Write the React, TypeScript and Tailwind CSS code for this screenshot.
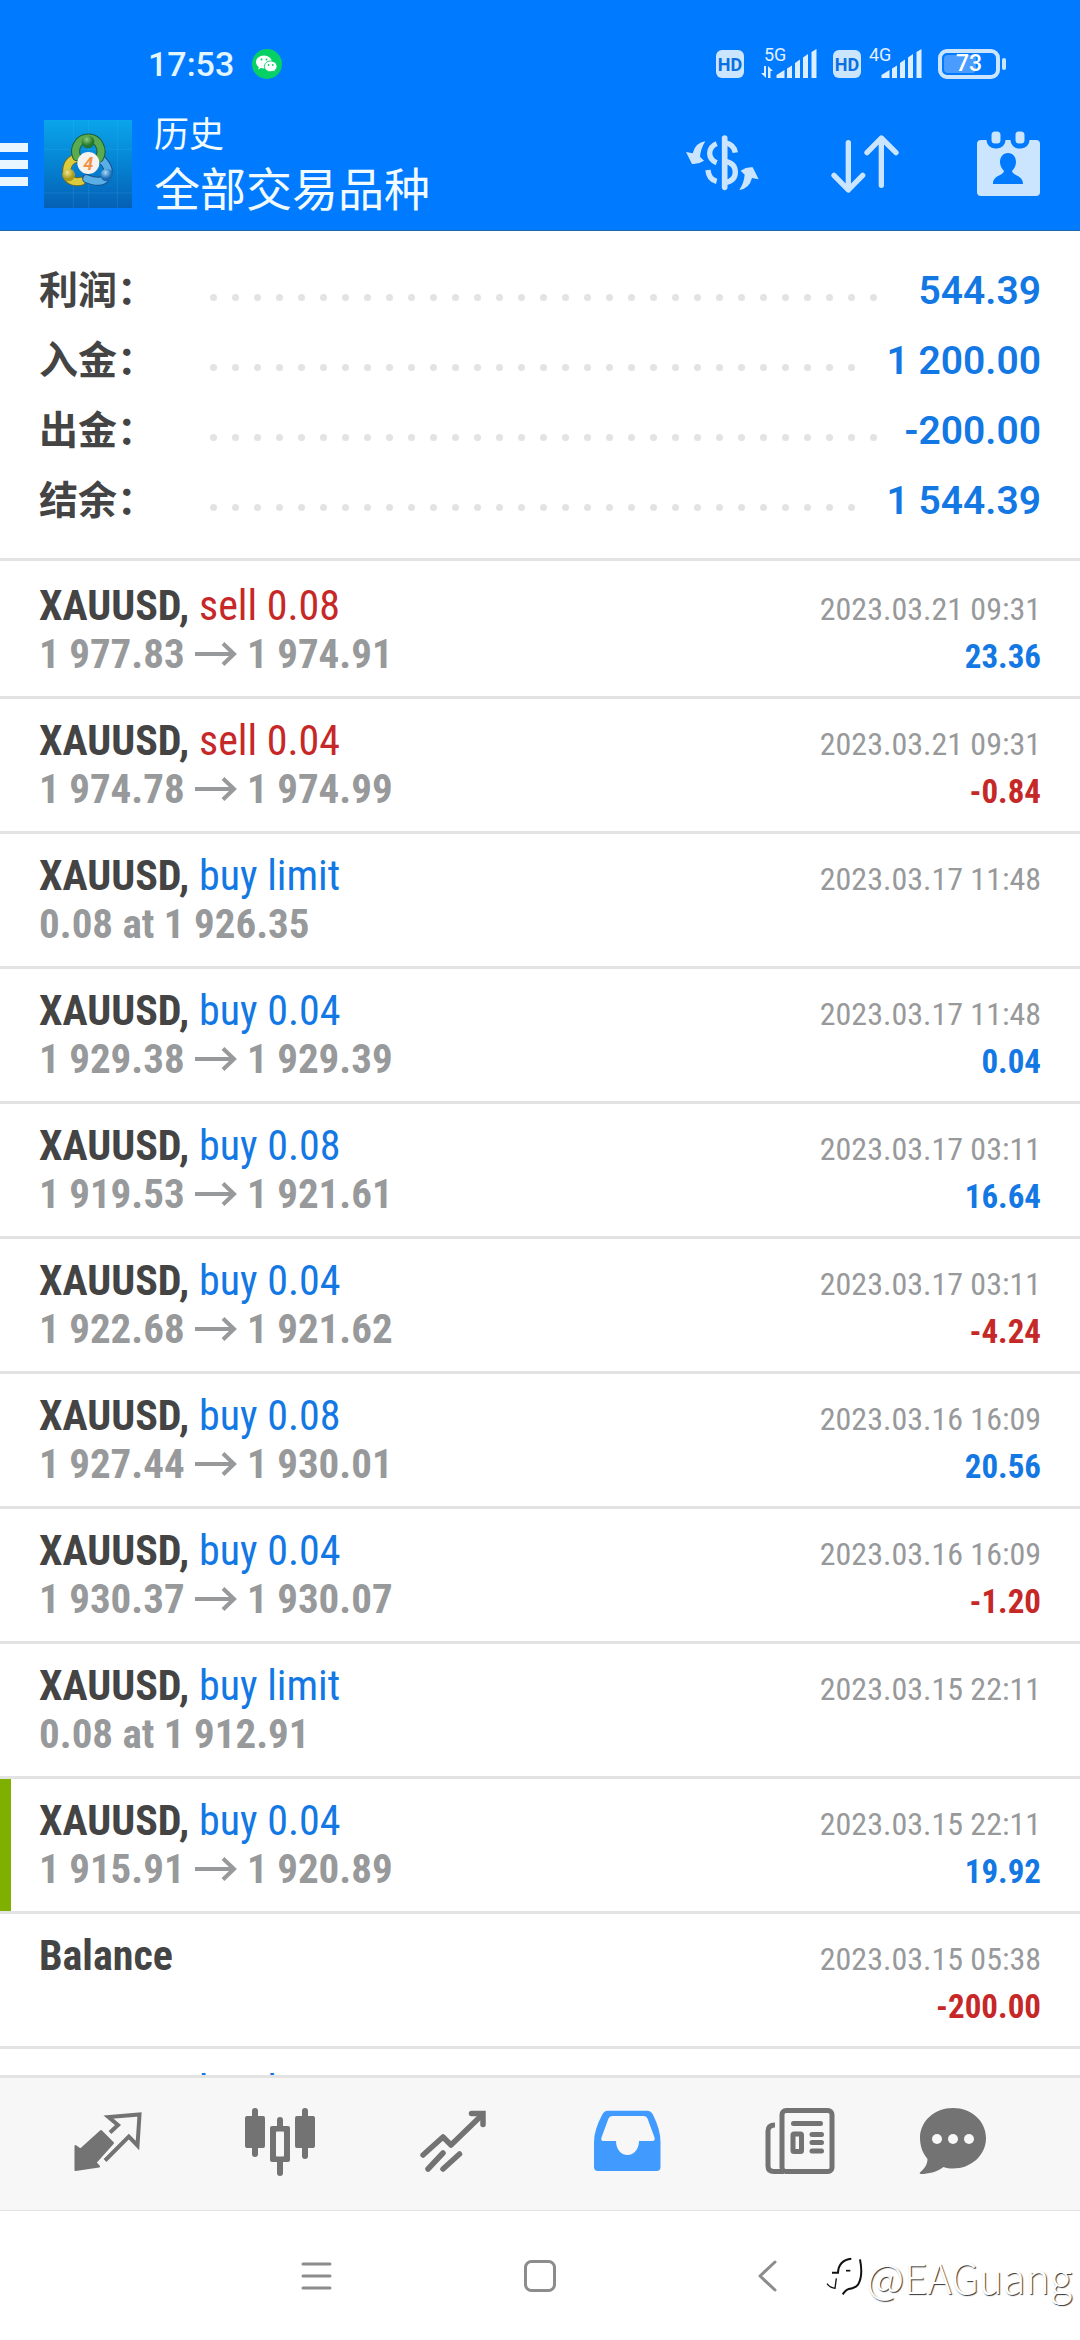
import clsx from "clsx";

type Deal = {
  symbol: string;
  action?: string;
  side?: "buy" | "sell";
  open?: string;
  close?: string;
  note?: string;
  time: string;
  profit?: string;
  marked?: boolean;
};

const summary = [
  { label: "利润：", value: "544.39" },
  { label: "入金：", value: "1 200.00" },
  { label: "出金：", value: "-200.00" },
  { label: "结余：", value: "1 544.39" },
];

const deals: Deal[] = [
  { symbol: "XAUUSD,", action: "sell 0.08", side: "sell", open: "1 977.83", close: "1 974.91", time: "2023.03.21 09:31", profit: "23.36" },
  { symbol: "XAUUSD,", action: "sell 0.04", side: "sell", open: "1 974.78", close: "1 974.99", time: "2023.03.21 09:31", profit: "-0.84" },
  { symbol: "XAUUSD,", action: "buy limit", side: "buy", note: "0.08 at 1 926.35", time: "2023.03.17 11:48" },
  { symbol: "XAUUSD,", action: "buy 0.04", side: "buy", open: "1 929.38", close: "1 929.39", time: "2023.03.17 11:48", profit: "0.04" },
  { symbol: "XAUUSD,", action: "buy 0.08", side: "buy", open: "1 919.53", close: "1 921.61", time: "2023.03.17 03:11", profit: "16.64" },
  { symbol: "XAUUSD,", action: "buy 0.04", side: "buy", open: "1 922.68", close: "1 921.62", time: "2023.03.17 03:11", profit: "-4.24" },
  { symbol: "XAUUSD,", action: "buy 0.08", side: "buy", open: "1 927.44", close: "1 930.01", time: "2023.03.16 16:09", profit: "20.56" },
  { symbol: "XAUUSD,", action: "buy 0.04", side: "buy", open: "1 930.37", close: "1 930.07", time: "2023.03.16 16:09", profit: "-1.20" },
  { symbol: "XAUUSD,", action: "buy limit", side: "buy", note: "0.08 at 1 912.91", time: "2023.03.15 22:11" },
  { symbol: "XAUUSD,", action: "buy 0.04", side: "buy", open: "1 915.91", close: "1 920.89", time: "2023.03.15 22:11", profit: "19.92", marked: true },
  { symbol: "Balance", time: "2023.03.15 05:38", profit: "-200.00" },
  { symbol: "XAUUSD,", action: "buy limit", side: "buy", time: "" },
];

const WeChatBadge = () => (
  <svg viewBox="0 0 30 30" className="size-[30px]" aria-hidden="true">
    <circle cx="15" cy="15" r="15" fill="#07d165" />
    <path
      d="M12 6.500c-4.600 0-8 3-8 6.600 0 2.100 1.100 3.800 2.800 5l-.6 2.300 2.700-1.300c1 .3 2 .5 3.100.5 4.400 0 8-2.900 8-6.500s-3.600-6.600-8-6.600z"
      fill="#fff"
    />
    <path
      d="M18.700 12c-3.600 0-6.300 2.400-6.300 5.400s2.800 5.300 6.300 5.300c.8 0 1.600-.1 2.300-.4l2.200 1.100-.5-1.900c1.400-1 2.300-2.500 2.300-4.100 0-3-2.800-5.400-6.300-5.400z"
      fill="#fff"
      stroke="#07d165"
      strokeWidth="1"
    />
    <g fill="#07d165">
      <circle cx="9.500" cy="10.500" r="1" />
      <circle cx="14.500" cy="10.500" r="1" />
      <circle cx="16.600" cy="16" r=".9" />
      <circle cx="20.800" cy="16" r=".9" />
    </g>
  </svg>
);

const HdBadge = () => (
  <span className="flex h-7 w-7 items-center justify-center rounded-md bg-[#cce5ff] text-[18px] font-bold text-[#0a6fe0]">
    HD
  </span>
);

const Signal = ({ label, arrows }: { label: string; arrows?: boolean }) => (
  <span className={clsx("relative block h-[30px] w-[53px]", arrows ? "ml-1" : "-ml-2")}>
    <svg viewBox="0 0 53 30" className="size-full overflow-visible" fill="#dceeff" aria-hidden="true">
      {arrows && <path d="M0 17h2v12l-5-5h3zM4 17l5 5H6.500v7H4z" />}
      <path d="M12.500 29v-3l8-5v8zM23 29v-9.500l5-3V29zM31 29V14l5-3.500V29zM39 29V8.500L44 5v24zM47.500 29V3l5-3v29z" />
    </svg>
    <span className="absolute top-0 left-0 text-[18px] leading-3 text-[#e3f1ff]">{label}</span>
  </span>
);

const Battery = () => (
  <span className="flex items-center gap-0.5">
    <span className="relative flex h-[30px] w-[62px] items-center justify-center rounded-[9px] border-4 border-[#cce5ff]">
      <span className="absolute inset-y-0.5 left-0.5 w-8 rounded-sm bg-[#4a9dff]" />
      <span className="relative text-[23px] font-medium text-white">73</span>
    </span>
    <span className="h-3 w-1 rounded-sm bg-[#cce5ff]" />
  </span>
);

const AppLogo = () => (
  <svg viewBox="24 28 264 264" className="size-[88px] shrink-0" aria-hidden="true">
    <defs>
      <linearGradient id="sky" x1="0" y1="0" x2="0" y2="1">
        <stop offset="0" stopColor="#0aa5ea" />
        <stop offset=".5" stopColor="#0583d3" />
        <stop offset="1" stopColor="#0560b4" />
      </linearGradient>
      <radialGradient id="green" cx=".4" cy=".3">
        <stop offset="0" stopColor="#8fd07a" />
        <stop offset="1" stopColor="#22762f" />
      </radialGradient>
      <radialGradient id="gold" cx=".4" cy=".3">
        <stop offset="0" stopColor="#f2e58a" />
        <stop offset="1" stopColor="#a99a1c" />
      </radialGradient>
      <radialGradient id="blue" cx=".4" cy=".3">
        <stop offset="0" stopColor="#a5daf8" />
        <stop offset="1" stopColor="#1769b4" />
      </radialGradient>
    </defs>
    <rect x="24" y="28" width="264" height="264" fill="url(#sky)" />
    <path d="M24 116h264M24 247h264M112 28v264M158 28v264M244 28v264" stroke="#5cc0f0" strokeOpacity=".25" strokeWidth="2" />
    <g fill="none" strokeLinecap="round">
      <path d="M122 142q-30 8-30 42t44 28" stroke="#6b6a20" strokeWidth="27" />
      <path d="M122 142q-30 8-30 42t44 28" stroke="#dccb3c" strokeWidth="21" />
      <path d="M196 146q30 28 16 52t-60 6" stroke="#15508c" strokeWidth="27" />
      <path d="M196 146q30 28 16 52t-60 6" stroke="#5aaee6" strokeWidth="21" />
      <path d="M122 138a38 40 0 1 1 68 4" stroke="#1c5c38" strokeWidth="27" />
      <path d="M122 138a38 40 0 1 1 68 4" stroke="#58ab4e" strokeWidth="21" />
    </g>
    <circle cx="156" cy="94" r="19" fill="url(#green)" />
    <circle cx="98" cy="193" r="19" fill="url(#gold)" />
    <circle cx="212" cy="193" r="19" fill="url(#blue)" />
    <circle cx="157" cy="157" r="33" fill="#f6f3ef" />
    <text x="157" y="177" textAnchor="middle" fontSize="54" fontWeight="700" fontStyle="italic" fill="#f0924a">
      4
    </text>
  </svg>
);

const CurrencyIcon = () => (
  <svg viewBox="12 44 228 180" className="h-[60px] w-[76px]" fill="none" stroke="#cce5ff" strokeWidth="16" aria-hidden="true">
    <path d="M76 66Q46 70 38 102L18 98l18 36q18 2 36-10L60 112q2-24 16-46z" fill="#cce5ff" stroke="none" />
    <path d="M76 66Q46 70 38 102L18 98l18 36q18 2 36-10L60 112q2-24 16-46z" fill="#cce5ff" stroke="none" transform="rotate(180 127 139)" />
    <path d="M134 56v148" strokeWidth="17" strokeLinecap="round" />
    <path d="M110 73Q89 82 89 102t21 28M84 152q2 28 26 34" />
    <path d="M136 70q26 6 30 30" />
    <path d="M136 126q30 6 30 32t-30 32" />
  </svg>
);

const SortIcon = () => (
  <svg viewBox="456 44 216 180" className="h-[60px] w-[72px] overflow-visible" fill="none" stroke="#cce5ff" strokeWidth="16" strokeLinecap="round" strokeLinejoin="round" aria-hidden="true">
    <path d="M505 70v140M462 168l43 44 43-44" />
    <path d="M604 198V58M561 100l43-44 44 44" />
  </svg>
);

const CalendarIcon = () => (
  <svg viewBox="0 0 64 66" className="h-[66px] w-16" aria-hidden="true">
    <rect x="1" y="9" width="63" height="56" rx="4" fill="#cce5ff" />
    <g fill="#cce5ff" stroke="#007aff" strokeWidth="5">
      <rect x="13" y="-2" width="14" height="17" rx="6" />
      <rect x="37" y="-2" width="14" height="17" rx="6" />
    </g>
    <path
      d="M32 22c5 0 8 4 8 9 0 4-2 7-4 9 1 5 11 4 11 13H17c0-9 10-8 11-13-2-2-4-5-4-9 0-5 3-9 8-9z"
      fill="#007aff"
    />
  </svg>
);

const QuotesIcon = () => (
  <svg viewBox="0 0 72 72" className="size-[72px]" aria-hidden="true">
    <path d="M4.500 38L9.500 41.500l20.500-18.500L42 35 24.500 54.500l3.500 4-23.500 3.500z" fill="#737373" stroke="#737373" strokeWidth="2" strokeLinejoin="round" />
    <path d="M39 24.500l8-7.500-9.500-8 31-2.500-2 31-8.700-9L34 52.500" fill="none" stroke="#737373" strokeWidth="4" />
  </svg>
);

const ChartIcon = () => (
  <svg viewBox="0 0 72 72" className="size-[72px]" fill="#737373" aria-hidden="true">
    <rect x="1" y="8" width="20" height="32" rx="2" />
    <rect x="8" y="0" width="6" height="49" rx="3" />
    <path fillRule="evenodd" d="M28 18h16q2 0 2 2v32q0 2-2 2H28q-2 0-2-2V20q0-2 2-2zm5 5.500q-1 0-1 1v23q0 1 1 1h6q1 0 1-1v-23q0-1-1-1z" />
    <rect x="33" y="9" width="6" height="12" rx="3" />
    <rect x="33" y="50" width="6" height="18" rx="3" />
    <rect x="51" y="8" width="20" height="32" rx="2" />
    <rect x="58" y="0" width="6" height="51" rx="3" />
  </svg>
);

const TradeIcon = () => (
  <svg viewBox="0 0 72 72" className="size-[72px]" fill="none" stroke="#737373" strokeWidth="5.500" strokeLinecap="round" aria-hidden="true">
    <path d="M6 47l20-18 8 8L65 7" strokeLinejoin="round" />
    <path d="M54.500 5.500H66v11" />
    <path d="M26 45L11 61M42.500 46L26 61" />
  </svg>
);

const HistoryIcon = () => (
  <svg viewBox="0 0 72 72" className="size-[72px]" aria-hidden="true">
    <path
      fillRule="evenodd"
      fill="#419bff"
      d="M17 2.700h39q4 0 6 4 7.500 15 7.500 27V59q0 4-4 4H7q-4 0-4-4V34Q3 22 11 7q2-4.300 6-4.300zM21 8q-2.500 0-3.500 2.500l-7 19q-1 3.500 2 3.500H25c0 8 5 14 11.500 14S48 41 48 33h13q3.500 0 2.500-3.500l-7-19Q55.500 8 53 8z"
    />
  </svg>
);

const NewsIcon = () => (
  <svg viewBox="0 0 72 72" className="size-[72px]" fill="none" stroke="#737373" strokeWidth="5" aria-hidden="true">
    <rect x="18" y="2.500" width="50" height="61" rx="4" />
    <path d="M11 17q-7 0-7 6v35q0 5.500 6 5.500h10" />
    <path d="M29.500 15.500h27M48 26.500h9.500M48 34.500h9.500M48 43h9.500" strokeLinecap="round" />
    <rect x="29" y="26" width="8.500" height="17.500" rx="1" />
  </svg>
);

const ChatIcon = () => (
  <svg viewBox="0 0 72 72" className="size-[72px]" aria-hidden="true">
    <path
      d="M34 0c18.500 0 33 13 33 30S52.500 60.500 34 60.500c-3.500 0-6.500-.5-9.500-1.500C18 64 9 66 2 66c-2 0-1.500-1-.5-2C6 60 8.500 56 8.500 51 4 45.500 1 38.500 1 30 1 13 15.500 0 34 0z"
      fill="#737373"
    />
    <g fill="#f7f7f7">
      <circle cx="18" cy="31" r="5" />
      <circle cx="34" cy="31" r="5" />
      <circle cx="50" cy="31" r="5" />
    </g>
  </svg>
);

const PriceArrow = () => (
  <svg viewBox="0 0 42 24" className="h-6 w-[42px]" fill="none" stroke="#97999b" strokeWidth="4" aria-hidden="true">
    <path d="M0 12h39M28 1.500L39 12 28 22.500" />
  </svg>
);

const tabs = [
  { name: "行情", icon: <QuotesIcon /> },
  { name: "图表", icon: <ChartIcon /> },
  { name: "交易", icon: <TradeIcon /> },
  { name: "历史", icon: <HistoryIcon /> },
  { name: "新闻", icon: <NewsIcon /> },
  { name: "消息", icon: <ChatIcon /> },
];

const SummaryRow = ({ label, value }: { label: string; value: string }) => (
  <div className="flex h-[70px] items-center">
    <dt className="w-[163px] shrink-0 text-[39px] font-bold text-[#444]">{label}</dt>
    <dd className="flex flex-1 items-center gap-4">
      {/* dotted leader, only whole dots are kept */}
      <span className="mt-3.5 flex h-2 flex-1 flex-wrap overflow-hidden" aria-hidden="true">
        {Array.from({ length: 60 }, (_, i) => (
          <span key={i} className="flex h-2 w-[22px] justify-center">
            <span className="size-[7px] rounded-full bg-[#e3e3e3]" />
          </span>
        ))}
      </span>
      <span className="text-[39px] font-semibold text-[#1378e3]">{value}</span>
    </dd>
  </div>
);

const DealRow = ({ deal }: { deal: Deal }) => (
  <li
    className={clsx(
      "relative flex h-[135px] shrink-0 justify-between border-b-3 border-[#e3e3e3] px-[39px] pt-[18px] font-['Roboto_Condensed','Roboto',sans-serif] leading-12",
      deal.marked && "before:absolute before:inset-y-0 before:left-0 before:w-[11px] before:bg-[#7fb000]"
    )}
  >
    <div className="text-[41px]">
      <p className="text-[42px]">
        <span className="font-bold text-[#444]">{deal.symbol}</span>{" "}
        <span className={deal.side === "sell" ? "text-[#c62828]" : "text-[#1378e3]"}>{deal.action}</span>
      </p>
      {deal.note && <p className="font-bold text-[#97999b]">{deal.note}</p>}
      {deal.open && (
        <p className="flex items-center font-bold text-[#97999b]">
          <span className="w-[156px]">{deal.open}</span>
          <PriceArrow />
          <span className="pl-2.5">{deal.close}</span>
        </p>
      )}
    </div>
    <div className="pt-[3px] text-right">
      <p className="text-[32px] text-[#97999b]">{deal.time}</p>
      {deal.profit && (
        <p className={clsx("text-[33px] font-bold", deal.profit.startsWith("-") ? "text-[#c62828]" : "text-[#1378e3]")}>
          {deal.profit}
        </p>
      )}
    </div>
  </li>
);

export default function App() {
  return (
    <div className="relative flex h-screen flex-col overflow-hidden bg-white font-['Roboto','Noto_Sans_CJK_SC',sans-serif]">
      <header className="shrink-0 border-b border-[#1e68b0] bg-[#007aff] text-white">
        {/* Status bar */}
        <div className="flex h-[98px] items-center justify-between pt-[30px] pr-[74px] pl-[148px]">
          <div className="flex items-center gap-[18px]">
            <span className="text-[34px] font-medium text-[#e3f5ff]">17:53</span>
            <WeChatBadge />
          </div>
          <div className="flex items-center gap-4">
            <HdBadge />
            <Signal label="5G" arrows />
            <HdBadge />
            <Signal label="4G" />
            <Battery />
          </div>
        </div>

        {/* Toolbar */}
        <div className="flex h-[132px] items-center pr-10">
          <button aria-label="菜单" className="mr-4 flex w-7 flex-col gap-2">
            <span className="h-[9px] bg-[#e8f6ff]" />
            <span className="h-[9px] bg-[#e8f6ff]" />
            <span className="h-[9px] bg-[#e8f6ff]" />
          </button>
          <AppLogo />
          <div className="flex-1 pl-[22px] font-['Noto_Sans_CJK_SC',sans-serif] text-[#f0faff]">
            <p className="text-[35px] leading-[44px]">历史</p>
            <h1 className="text-[46px] leading-[64px] font-normal">全部交易品种</h1>
          </div>
          <div className="flex items-center gap-[72px]">
            <button aria-label="货币"><CurrencyIcon /></button>
            <button aria-label="排序"><SortIcon /></button>
            <button aria-label="日期"><CalendarIcon /></button>
          </div>
        </div>
      </header>

      <main className="min-h-0 flex-1 overflow-hidden">
        <dl className="border-b-3 border-[#e3e3e3] px-[39px] pt-[25px] pb-[22px]">
          {summary.map((row) => (
            <SummaryRow key={row.label} {...row} />
          ))}
        </dl>
        <ul className="flex flex-col pt-[3px]">
          {deals.map((deal, i) => (
            <DealRow key={i} deal={deal} />
          ))}
        </ul>
      </main>

      {/* Tab bar */}
      <nav className="grid h-[136px] shrink-0 grid-cols-6 items-center border-t-3 border-b border-[#e3e3e3] bg-[#f7f7f7] px-5">
        {tabs.map((tab) => (
          <button key={tab.name} aria-label={tab.name} className="flex justify-center last:justify-start last:pl-8">
            {tab.icon}
          </button>
        ))}
      </nav>

      {/* System navigation */}
      <div className="flex h-[129px] shrink-0 items-center justify-center gap-48">
        <button aria-label="最近任务">
          <svg viewBox="0 0 32 32" className="size-8" stroke="#8c8c8c" strokeWidth="3" strokeLinecap="round">
            <path d="M3 4h27M3 16h27M3 28h27" />
          </svg>
        </button>
        <button aria-label="主屏幕">
          <svg viewBox="0 0 32 32" className="size-8" fill="none" stroke="#8c8c8c" strokeWidth="3">
            <rect x="1.500" y="1.500" width="29" height="29" rx="6" />
          </svg>
        </button>
        <button aria-label="返回">
          <svg viewBox="0 0 32 32" className="size-8" fill="none" stroke="#8c8c8c" strokeWidth="3" strokeLinecap="round" strokeLinejoin="round">
            <path d="M27 2L12 16l15 14" />
          </svg>
        </button>
      </div>

      {/* Watermark */}
      <div className="absolute right-2 bottom-[38px] flex items-center gap-1">
        <svg viewBox="14 42 114 126" className="h-[42px] w-[38px]" fill="none" stroke="#111" aria-hidden="true">
          <path d="M20 128q8 12 24 14l4-30" strokeWidth="4" />
          <path d="M35 95h18q2-38 40-42" strokeWidth="6" />
          <path d="M119 55q10 50-6 76-8 10-28 13-8 2-18 16" strokeWidth="6" />
          <path d="M77 89h13" strokeWidth="5" />
        </svg>
        <span className="font-['Noto_Sans_CJK_SC',sans-serif] text-[41px] leading-[52px] font-light text-white [text-shadow:1px_1px_1px_rgb(0_0_0/0.8)]">
          @EAGuang
        </span>
      </div>
    </div>
  );
}
